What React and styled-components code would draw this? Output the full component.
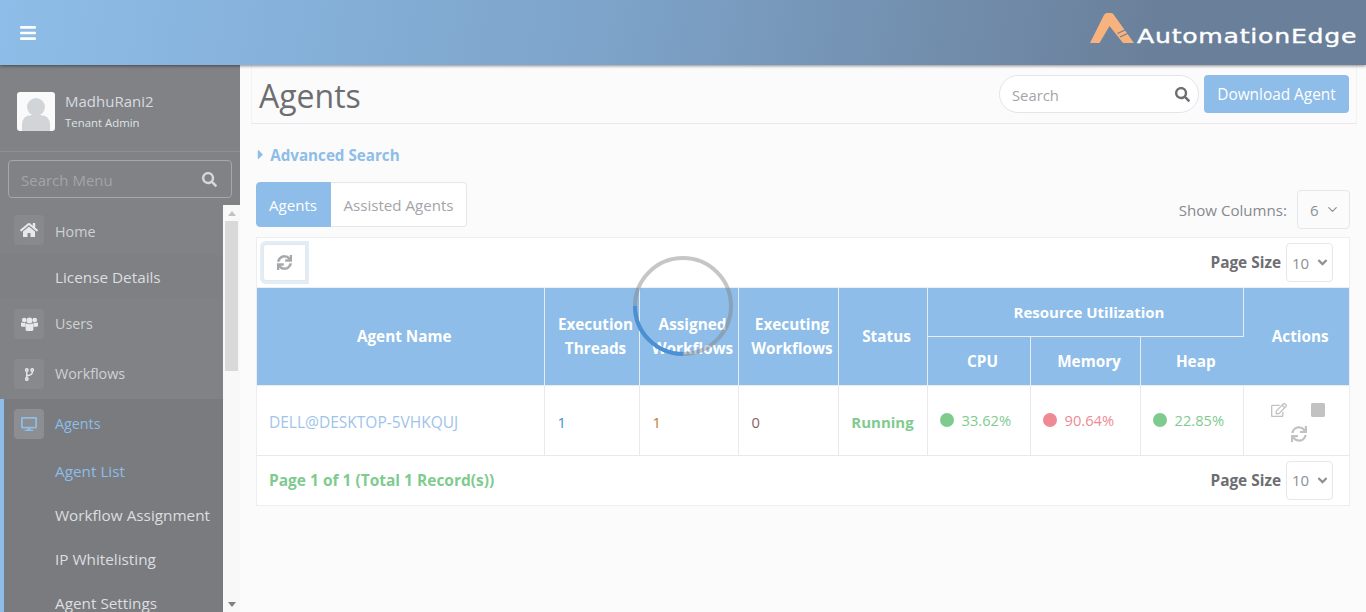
import styled, { createGlobalStyle } from "styled-components"
import { FaBars, FaSearch, FaHome, FaDesktop, FaCaretRight, FaSync, FaRegEdit, FaStop, FaAngleDown } from "react-icons/fa"
import { FiChevronDown } from "react-icons/fi"

const GlobalStyle = createGlobalStyle`
  html, body {
    margin: 0;
    height: 100%;
    overflow: hidden;
    font-family: "Open Sans", "Liberation Sans", sans-serif;
    font-size: 14px;
    color: #6d6e71;
  }
  * { box-sizing: border-box; }
`

const Page = styled.div`
  width: 1366px;
  height: 612px;
  display: flex;
  flex-direction: column;
  background: #fbfbfc;
  overflow: hidden;
`

const Header = styled.header`
  height: 65px;
  flex: none;
  display: flex;
  align-items: center;
  justify-content: space-between;
  padding: 0 10px 0 19px;
  color: #fff;
  font-size: 18px;
  background: linear-gradient(100deg, #8dbde8 0%, #7da3c9 45%, #6a7f99 85%);
  box-shadow: 0 1px 3px rgba(0, 0, 0, 0.45);
  position: relative;
  z-index: 2;
`

const Logo = styled.div`
  display: flex;
  align-items: flex-end;
  gap: 3px;
  margin-top: -9px;
`

const LogoText = styled.span`
  width: 219px;
  white-space: nowrap;
  font-family: "DejaVu Sans", sans-serif;
  font-size: 19px;
  line-height: 19px;
  letter-spacing: 0.55px;
  -webkit-text-stroke: 0.35px #fff;
  margin-bottom: -3px;
  transform: scaleX(1.325);
  transform-origin: left center;
`

const Body = styled.div`
  flex: 1;
  display: flex;
  min-height: 0;
`

const Sidebar = styled.aside`
  width: 240px;
  flex: none;
  display: flex;
  flex-direction: column;
  background: #808285;
`

const UserPanel = styled.div`
  height: 87px;
  flex: none;
  display: flex;
  align-items: center;
  gap: 10px;
  padding: 7px 0 0 17px;
  border-bottom: 1px solid #8d8f92;
`

const Avatar = styled.div`
  width: 38px;
  height: 39px;
  border-radius: 3px;
  background: #fafafa;
  overflow: hidden;
  display: flex;
`

const UserText = styled.div`
  padding-top: 2px;
`

const UserName = styled.div`
  font-size: 15px;
  line-height: 20px;
  color: #d6dbe0;
`

const UserRole = styled.div`
  margin-top: 1px;
  font-size: 11.4px;
  line-height: 22px;
  color: #dfe3e6;
`

const MenuSearch = styled.div`
  height: 38px;
  margin: 8px 8px 7px;
  flex: none;
  display: flex;
  align-items: center;
  justify-content: space-between;
  padding: 0 14px 0 12px;
  border: 1px solid #a5a7aa;
  border-radius: 4px;
  font-size: 15px;
  color: #a3a5a8;
`

const MenuSearchLabel = styled.span`
  padding-top: 2px;
`

const MenuSearchIcon = styled(FaSearch)`
  font-size: 15px;
  color: #d5d7d9;
`

const MenuArea = styled.div`
  flex: 1;
  min-height: 0;
  display: flex;
`

const Menu = styled.nav`
  width: 223px;
  flex: none;
  overflow: hidden;
`

const MenuItem = styled.div`
  height: 50px;
  display: flex;
  align-items: center;
  gap: 11px;
  padding-left: ${p => (p.$active ? "10px" : "14px")};
  font-size: 14.3px;
  color: ${p => (p.$active ? "#8dbde8" : "#cfd1d3")};
`

const MenuLabel = styled.span`
  padding: ${p => (p.$low ? "2px 0 0" : "0 0 2px")};
`

const MenuIcon = styled.span`
  width: 30px;
  height: 30px;
  border-radius: 4px;
  display: flex;
  align-items: center;
  justify-content: center;
  font-size: ${p => p.$size || 16}px;
  color: ${p => (p.$active ? "#8dbde8" : "#e6e8ea")};
  background: ${p => (p.$active ? "#8c8e91" : "#87898c")};
`

const SubItem = styled.div`
  height: 44px;
  display: flex;
  align-items: center;
  padding-left: ${p => (p.$active ? "51px" : "55px")};
  font-size: 15.3px;
  color: ${p => (p.$on ? "#8dbde8" : "#dcdee0")};
`

const SubGroup = styled.div`
  background: #7e8083;
`

const ActiveGroup = styled.div`
  background: #7a7b7e;
  border-left: 4px solid #8dbde8;
`

const Scrollbar = styled.div`
  width: 17px;
  flex: none;
  display: flex;
  flex-direction: column;
  justify-content: space-between;
  background: #f8f8f8;
`

const ScrollTop = styled.div`
  display: flex;
  flex-direction: column;
  align-items: center;
`

const ArrowUp = styled.div`
  margin: 6px 0 5px;
  border: 4px solid transparent;
  border-top: 0;
  border-bottom: 5px solid #c2c2c2;
  height: 5px;
  width: 8px;
`

const ArrowDown = styled.div`
  margin: 0 auto 5px;
  border: 4px solid transparent;
  border-bottom: 0;
  border-top: 5px solid #7f7f7f;
  height: 5px;
  width: 8px;
`

const Thumb = styled.div`
  width: 13px;
  height: 150px;
  background: #d9d9d9;
`

const Main = styled.main`
  flex: 1;
  min-width: 0;
  display: flex;
  flex-direction: column;
`

const TitleBar = styled.div`
  height: 59px;
  margin: 0 9px 0 11px;
  flex: none;
  display: flex;
  align-items: center;
  justify-content: space-between;
  padding: 4px 7px 0 7px;
  border: 1px solid #f3f3f5;
  border-top: 0;
  border-bottom-color: #e9e9ec;
`

const Title = styled.h1`
  margin: 0;
  font-size: 32px;
  line-height: 40px;
  font-weight: 400;
  color: #6d6e71;
`

const TitleActions = styled.div`
  display: flex;
  gap: 5px;
  margin-bottom: 4px;
`

const SearchPill = styled.div`
  width: 200px;
  height: 38px;
  display: flex;
  align-items: center;
  justify-content: space-between;
  padding: 1px 8px 0 12px;
  background: #fff;
  border: 1px solid #e2e5ea;
  border-radius: 19px;
  font-size: 14.8px;
  color: #a3a5a8;
`

const SearchIcon = styled(FaSearch)`
  font-size: 15px;
  color: #6d6e71;
`

const DownloadButton = styled.button`
  width: 145px;
  height: 38px;
  padding: 0;
  border: 0;
  border-radius: 4px;
  background: #8dbde8;
  color: #fff;
  font: inherit;
  font-size: 15.4px;
`

const Content = styled.div`
  padding: 0 16px;
`

const Advanced = styled.div`
  margin-top: 20px;
  display: flex;
  align-items: center;
  gap: 2px;
  height: 22px;
  font-size: 15.2px;
  font-weight: 700;
  color: #8dbde8;

  svg { margin-left: -3px; }
`

const TabRow = styled.div`
  margin-top: 16px;
  height: 47px;
  display: flex;
  justify-content: space-between;
`

const Tabs = styled.div`
  height: 45px;
  display: flex;
`

const Tab = styled.div`
  display: flex;
  align-items: center;
  padding: 0 12.5px 0 ${p => (p.$active ? 12 : 13)}px;
  font-size: 15.1px;
  background: ${p => (p.$active ? "#8dbde8" : "#fff")};
  color: ${p => (p.$active ? "#fff" : "#a3a5a8")};
  border: 1px solid ${p => (p.$active ? "#8dbde8" : "#e4e7ec")};
  border-left-width: ${p => (p.$active ? "1px" : "0")};
  border-radius: ${p => (p.$active ? "4px 0 0 4px" : "0 4px 4px 0")};
`

const ColumnsPicker = styled.div`
  align-self: flex-end;
  display: flex;
  align-items: center;
  gap: 10px;
  font-size: 15.1px;
  color: #87898c;
`

const Select = styled.div`
  width: ${p => p.$w}px;
  height: 39px;
  display: flex;
  align-items: center;
  justify-content: space-between;
  padding: 0 ${p => p.$right}px 0 ${p => p.$pad}px;
  background: ${p => (p.$plain ? "transparent" : "#fff")};
  border: 1px solid #e4e7ec;
  border-radius: 4px;
  font-size: 15px;
  font-weight: 400;
  color: #8d9094;
`

const TableCard = styled.div`
  margin-top: 8px;
  position: relative;
  background: #fff;
  border: 1px solid #eeeef0;
`

const Bar = styled.div`
  height: ${p => p.$h}px;
  display: flex;
  align-items: center;
  justify-content: space-between;
  padding: 0 16px 0 ${p => p.$left}px;
  border-bottom: ${p => (p.$line ? "1px solid #eeeef0" : "0")};
`

const RefreshButton = styled.button`
  width: 43px;
  height: 37px;
  display: flex;
  align-items: center;
  justify-content: center;
  margin-bottom: 1px;
  padding: 0;
  background: #fff;
  border: 1px solid #e4e7ec;
  border-radius: 3px 0 0 3px;
  box-shadow: 0 0 0 3px #e3edf6;
  color: #a5a7aa;
  font-size: 15px;

  svg { stroke: currentColor; stroke-width: 16; }
`

const PageSize = styled.div`
  display: flex;
  align-items: center;
  gap: 5px;
  font-size: 15.4px;
  font-weight: 700;
  color: #6d6e71;
`

const AgentTable = styled.table`
  width: 1092px;
  table-layout: fixed;
  border-collapse: collapse;
`

const Th = styled.th`
  height: ${p => p.$h || 48}px;
  padding: 0 0 0 ${p => p.$left ?? 8}px;
  background: #8dbde8;
  border: 1px solid #e8edf2;
  border-top: 0;
  border-left: 0;
  color: #fff;
  font-size: ${p => p.$size || 15.3}px;
  line-height: 24px;
  font-weight: 700;
  &:last-child { border-right: 0; }
`

const Td = styled.td`
  height: 70px;
  padding: 4px 0 0 ${p => p.$pad || 0}px;
  border-right: 1px solid #e8e9ec;
  border-bottom: 1px solid #e8e9ec;
  font-size: ${p => p.$size || 14.7}px;
  color: ${p => p.$color || "#6d6e71"};
  font-weight: ${p => (p.$bold ? 700 : 400)};
  text-align: ${p => (p.$center ? "center" : "left")};
  &:last-child { border-right: 0; }
`

const Usage = styled.div`
  display: flex;
  align-items: center;
  gap: 8px;
  margin-top: -5px;
  color: ${p => p.$color};
`

const Dot = styled.span`
  width: 14px;
  height: 14px;
  border-radius: 50%;
  background: ${p => p.$color};
`

const ActionRow = styled.div`
  display: flex;
  justify-content: center;
  align-items: center;
  gap: ${p => p.$gap}px;
  height: 24px;
  padding-left: 5px;
  color: #c2c2c2;
  font-size: 16px;
`

const FooterText = styled.div`
  font-size: 15.5px;
  font-weight: 700;
  color: #7fcb8f;
`

const Spinner = styled.svg`
  position: absolute;
  left: 374px;
  top: 16px;
  pointer-events: none;
`

const columns = [287, 95, 99, 100, 89, 103, 110, 103, 106]
const usage = [
  ["33.62%", "#7fcb8f"],
  ["90.64%", "#ee8a94"],
  ["22.85%", "#7fcb8f"],
]

function UsersIcon() {
  return (
    <svg width="17" height="14" viewBox="0 0 17 14" fill="currentColor">
      <circle cx="3.2" cy="3" r="2.3" />
      <circle cx="13.8" cy="3" r="2.3" />
      <circle cx="8.5" cy="3.6" r="3" />
      <path d="M0 6.2 Q0 5.4 1 5.6 Q3 6.4 4.6 5.6 Q4.4 8 4.6 9.8 H1 Q0 9.8 0 8.8 Z" />
      <path d="M17 6.2 Q17 5.4 16 5.6 Q14 6.4 12.4 5.6 Q12.6 8 12.4 9.8 H16 Q17 9.8 17 8.8 Z" />
      <path d="M4.6 8 Q4.6 6.6 5.8 6.6 Q8.5 8 11.2 6.6 Q12.4 6.6 12.4 8 V12.4 Q12.4 14 10.8 14 H6.2 Q4.6 14 4.6 12.4 Z" />
    </svg>
  )
}

function ForkIcon() {
  return (
    <svg width="9" height="13" viewBox="0 0 10 14" fill="none" stroke="currentColor" strokeWidth="1.6">
      <circle cx="2" cy="2" r="1.4" />
      <circle cx="8" cy="2" r="1.4" />
      <circle cx="2" cy="12" r="1.4" />
      <path d="M2 3.4 V10.6 M8 3.4 V5 Q8 7.4 2 8.4" />
    </svg>
  )
}

function PageSizeSelect() {
  return (
    <PageSize>
      Page Size
      <Select $w={47} $pad={5} $right={2}>10 <FaAngleDown /></Select>
    </PageSize>
  )
}

function App() {
  return (
    <Page>
      <GlobalStyle />
      <Header>
        <FaBars />
        <Logo>
          <svg width="44" height="30" viewBox="0 0 44 30">
            <path d="M0 30 L14 2 Q15 0 17 0 L21 0 Q23 0 24 2 L44 30 L33 30 L19.5 13 L9.5 30 Z" fill="#f7b27d" />
            <path d="M27.5 20.5 L35 17 M30 24 L37.5 20.5" stroke="#6b809b" strokeWidth="1.3" />
          </svg>
          <LogoText>AutomationEdge</LogoText>
        </Logo>
      </Header>
      <Body>
        <Sidebar>
          <UserPanel>
            <Avatar>
              <svg width="38" height="39" viewBox="0 0 38 39">
                <circle cx="19" cy="15" r="9" fill="#d2d5d8" />
                <path d="M5 39 V33 Q5 23 15 23 H23 Q33 23 33 33 V39 Z" fill="#d2d5d8" />
              </svg>
            </Avatar>
            <UserText>
              <UserName>MadhuRani2</UserName>
              <UserRole>Tenant Admin</UserRole>
            </UserText>
          </UserPanel>
          <MenuSearch>
            <MenuSearchLabel>Search Menu</MenuSearchLabel>
            <MenuSearchIcon />
          </MenuSearch>
          <MenuArea>
            <Menu>
              <MenuItem><MenuIcon $size={18}><FaHome /></MenuIcon><MenuLabel $low>Home</MenuLabel></MenuItem>
              <SubGroup><SubItem>License Details</SubItem></SubGroup>
              <MenuItem><MenuIcon><UsersIcon /></MenuIcon><MenuLabel>Users</MenuLabel></MenuItem>
              <MenuItem><MenuIcon><ForkIcon /></MenuIcon><MenuLabel>Workflows</MenuLabel></MenuItem>
              <ActiveGroup>
                <MenuItem $active><MenuIcon $active><FaDesktop /></MenuIcon><MenuLabel>Agents</MenuLabel></MenuItem>
                <SubItem $active $on>Agent List</SubItem>
                <SubItem $active>Workflow Assignment</SubItem>
                <SubItem $active>IP Whitelisting</SubItem>
                <SubItem $active>Agent Settings</SubItem>
              </ActiveGroup>
            </Menu>
            <Scrollbar>
              <ScrollTop>
                <ArrowUp />
                <Thumb />
              </ScrollTop>
              <ArrowDown />
            </Scrollbar>
          </MenuArea>
        </Sidebar>
        <Main>
          <TitleBar>
            <Title>Agents</Title>
            <TitleActions>
              <SearchPill>Search <SearchIcon /></SearchPill>
              <DownloadButton>Download Agent</DownloadButton>
            </TitleActions>
          </TitleBar>
          <Content>
            <Advanced><FaCaretRight />Advanced Search</Advanced>
            <TabRow>
              <Tabs>
                <Tab $active>Agents</Tab>
                <Tab>Assisted Agents</Tab>
              </Tabs>
              <ColumnsPicker>
                Show Columns:
                <Select $w={53} $plain $pad={12} $right={9}>6 <FiChevronDown /></Select>
              </ColumnsPicker>
            </TabRow>
            <TableCard>
              <Bar $h={50} $left={6} $line>
                <RefreshButton><FaSync /></RefreshButton>
                <PageSizeSelect />
              </Bar>
              <AgentTable>
                <colgroup>
                  {columns.map((w, i) => <col key={i} width={w} />)}
                </colgroup>
                <thead>
                  <tr>
                    <Th rowSpan={2}>Agent Name</Th>
                    <Th rowSpan={2}>Execution<br />Threads</Th>
                    <Th rowSpan={2}>Assigned<br />Workflows</Th>
                    <Th rowSpan={2}>Executing<br />Workflows</Th>
                    <Th rowSpan={2}>Status</Th>
                    <Th colSpan={3} $size={15}>Resource Utilization</Th>
                    <Th rowSpan={2}>Actions</Th>
                  </tr>
                  <tr>
                    <Th $h={49}>CPU</Th>
                    <Th $h={49}>Memory</Th>
                    <Th $h={49}>Heap</Th>
                  </tr>
                </thead>
                <tbody>
                  <tr>
                    <Td $pad={12} $size={15.5} $color="#9fc4ea">DELL@DESKTOP-5VHKQUJ</Td>
                    <Td $pad={13} $color="#3d8fd0">1</Td>
                    <Td $pad={13} $color="#b8802a">1</Td>
                    <Td $pad={13} $color="#8a6060">0</Td>
                    <Td $center $bold $size={15} $color="#7fcb8f">Running</Td>
                    {usage.map(([value, color]) => (
                      <Td key={value} $pad={12}>
                        <Usage $color={color}><Dot $color={color} />{value}</Usage>
                      </Td>
                    ))}
                    <Td>
                      <ActionRow $gap={23}><FaRegEdit /><FaStop /></ActionRow>
                      <ActionRow $gap={0}><FaSync /></ActionRow>
                    </Td>
                  </tr>
                </tbody>
              </AgentTable>
              <Bar $h={49} $left={12}>
                <FooterText>Page 1 of 1 (Total 1 Record(s))</FooterText>
                <PageSizeSelect />
              </Bar>
              <Spinner width="104" height="104" viewBox="0 0 104 104">
                <circle cx="52" cy="52" r="48" fill="none" stroke="rgba(128,128,128,0.45)" strokeWidth="4" />
                <path d="M4 52 A48 48 0 0 0 52 100" fill="none" stroke="#4a90d4" strokeWidth="4" />
              </Spinner>
            </TableCard>
          </Content>
        </Main>
      </Body>
    </Page>
  )
}

export default App
